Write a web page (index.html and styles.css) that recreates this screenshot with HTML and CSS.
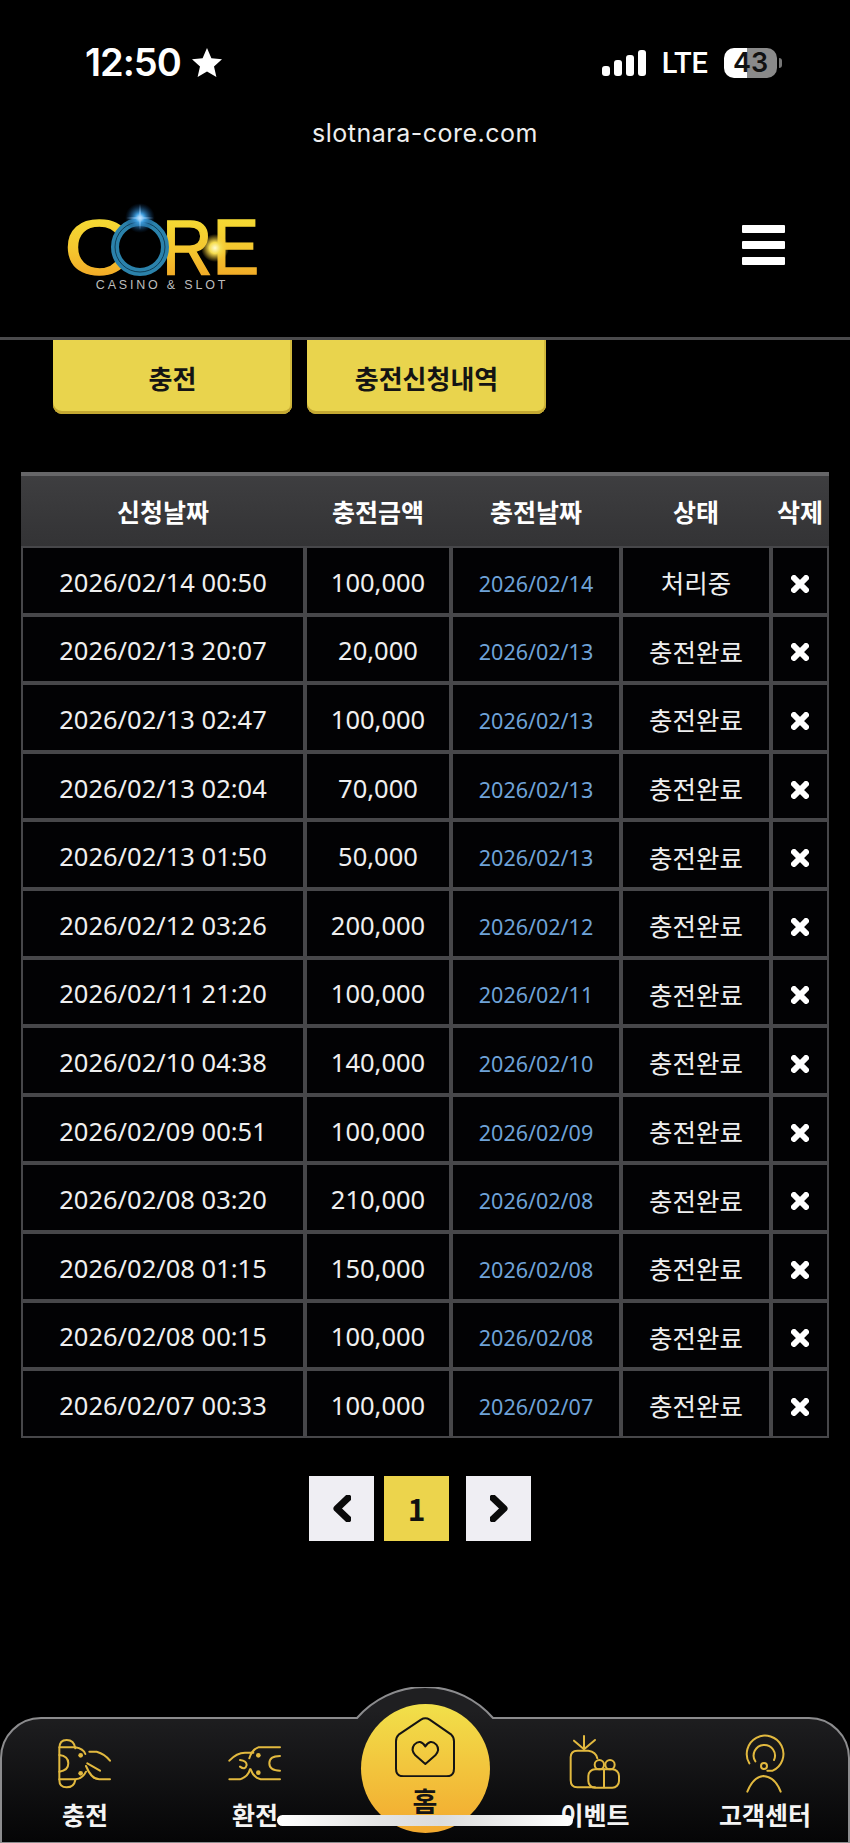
FILE: index.html

```html
<!DOCTYPE html>
<html lang="ko">
<head>
  <meta charset="UTF-8" />
  <meta name="viewport" content="width=device-width, initial-scale=1.0" />
  <title>충전신청내역</title>
  <link rel="stylesheet" href="styles.css">
</head>
<body>
<div class="page">

  <div class="status-bar">
    <div class="status-left">
      <span class="time">12:50</span>
      <svg class="star" viewBox="0 0 32 32"><polygon points="16,1 20.4,11.2 31,12.2 23,19.4 25.4,30 16,24.4 6.6,30 9,19.4 1,12.2 11.6,11.2" fill="#fff"/></svg>
    </div>
    <div class="status-right">
      <div class="signal"><span class="s1"></span><span class="s2"></span><span class="s3"></span><span class="s4"></span></div>
      <span class="lte">LTE</span>
      <div class="battery">43</div>
      <div class="battery-nub"></div>
    </div>
  </div>

  <div class="url">slotnara-core.com</div>

  <header class="header">
    <svg class="logo" viewBox="0 0 240 110">
      <defs>
        <linearGradient id="gold" x1="0" y1="0" x2="0" y2="1">
          <stop offset="0" stop-color="#f4e436"/>
          <stop offset="0.55" stop-color="#f5c52e"/>
          <stop offset="1" stop-color="#ee9a22"/>
        </linearGradient>
        <radialGradient id="flare">
          <stop offset="0" stop-color="#e8f6ff"/>
          <stop offset="0.3" stop-color="#3f9fe0"/>
          <stop offset="1" stop-color="#0a3a70" stop-opacity="0"/>
        </radialGradient>
        <radialGradient id="spark">
          <stop offset="0" stop-color="#fffbd0"/>
          <stop offset="0.4" stop-color="#f5dd50"/>
          <stop offset="1" stop-color="#f5c52e" stop-opacity="0"/>
        </radialGradient>
      </defs>
      <text class="logo-letter" x="24" y="86" textLength="66" lengthAdjust="spacingAndGlyphs" fill="url(#gold)" stroke="url(#gold)">C</text>
      <text class="logo-letter" x="122" y="86" textLength="97" lengthAdjust="spacingAndGlyphs" fill="url(#gold)" stroke="url(#gold)">RE</text>
      <circle cx="100" cy="59" r="25" fill="#000"/>
      <circle cx="100" cy="59" r="25" fill="none" stroke="#2b82ab" stroke-width="8"/>
      <circle cx="100" cy="59" r="25" fill="none" stroke="#0f3f58" stroke-width="1"/>
      <circle cx="100" cy="30" r="15" fill="url(#flare)"/>
      <path d="M100 16 L101.5 30 L100 42 L98.5 30Z M86 30 L100 28.5 L114 30 L100 31.5Z" fill="#9fd4ff" opacity="0.5"/>
      <circle cx="175" cy="60" r="14" fill="url(#spark)"/>
      <text class="logo-sub" x="122" y="101" text-anchor="middle">CASINO &amp; SLOT</text>
    </svg>
    <div class="burger"><span></span><span></span><span></span></div>
  </header>

  <div class="tabs">
    <button class="tab">충전</button>
    <button class="tab">충전신청내역</button>
  </div>

  <table class="history">
    <colgroup>
      <col class="c-req"><col class="c-amount"><col class="c-date"><col class="c-state"><col class="c-del">
    </colgroup>
    <thead>
      <tr><th>신청날짜</th><th>충전금액</th><th>충전날짜</th><th>상태</th><th>삭제</th></tr>
    </thead>
    <tbody>
      <tr><td>2026/02/14 00:50</td><td>100,000</td><td class="blue">2026/02/14</td><td>처리중</td><td><svg class="del" viewBox="0 0 18 18"><path d="M3 3L15 15M15 3L3 15"/></svg></td></tr>
      <tr><td>2026/02/13 20:07</td><td>20,000</td><td class="blue">2026/02/13</td><td>충전완료</td><td><svg class="del" viewBox="0 0 18 18"><path d="M3 3L15 15M15 3L3 15"/></svg></td></tr>
      <tr><td>2026/02/13 02:47</td><td>100,000</td><td class="blue">2026/02/13</td><td>충전완료</td><td><svg class="del" viewBox="0 0 18 18"><path d="M3 3L15 15M15 3L3 15"/></svg></td></tr>
      <tr><td>2026/02/13 02:04</td><td>70,000</td><td class="blue">2026/02/13</td><td>충전완료</td><td><svg class="del" viewBox="0 0 18 18"><path d="M3 3L15 15M15 3L3 15"/></svg></td></tr>
      <tr><td>2026/02/13 01:50</td><td>50,000</td><td class="blue">2026/02/13</td><td>충전완료</td><td><svg class="del" viewBox="0 0 18 18"><path d="M3 3L15 15M15 3L3 15"/></svg></td></tr>
      <tr><td>2026/02/12 03:26</td><td>200,000</td><td class="blue">2026/02/12</td><td>충전완료</td><td><svg class="del" viewBox="0 0 18 18"><path d="M3 3L15 15M15 3L3 15"/></svg></td></tr>
      <tr><td>2026/02/11 21:20</td><td>100,000</td><td class="blue">2026/02/11</td><td>충전완료</td><td><svg class="del" viewBox="0 0 18 18"><path d="M3 3L15 15M15 3L3 15"/></svg></td></tr>
      <tr><td>2026/02/10 04:38</td><td>140,000</td><td class="blue">2026/02/10</td><td>충전완료</td><td><svg class="del" viewBox="0 0 18 18"><path d="M3 3L15 15M15 3L3 15"/></svg></td></tr>
      <tr><td>2026/02/09 00:51</td><td>100,000</td><td class="blue">2026/02/09</td><td>충전완료</td><td><svg class="del" viewBox="0 0 18 18"><path d="M3 3L15 15M15 3L3 15"/></svg></td></tr>
      <tr><td>2026/02/08 03:20</td><td>210,000</td><td class="blue">2026/02/08</td><td>충전완료</td><td><svg class="del" viewBox="0 0 18 18"><path d="M3 3L15 15M15 3L3 15"/></svg></td></tr>
      <tr><td>2026/02/08 01:15</td><td>150,000</td><td class="blue">2026/02/08</td><td>충전완료</td><td><svg class="del" viewBox="0 0 18 18"><path d="M3 3L15 15M15 3L3 15"/></svg></td></tr>
      <tr><td>2026/02/08 00:15</td><td>100,000</td><td class="blue">2026/02/08</td><td>충전완료</td><td><svg class="del" viewBox="0 0 18 18"><path d="M3 3L15 15M15 3L3 15"/></svg></td></tr>
      <tr><td>2026/02/07 00:33</td><td>100,000</td><td class="blue">2026/02/07</td><td>충전완료</td><td><svg class="del" viewBox="0 0 18 18"><path d="M3 3L15 15M15 3L3 15"/></svg></td></tr>
    </tbody>
  </table>

  <div class="pager">
    <a class="pg"><svg viewBox="0 0 18 27"><path d="M15 3L4 13.5L15 24"/></svg></a>
    <a class="pg current">1</a>
    <a class="pg next"><svg viewBox="0 0 18 27"><path d="M3 3L14 13.5L3 24"/></svg></a>
  </div>

  <nav class="bottom-nav">
    <svg class="nav-shape" viewBox="0 0 850 156">
      <defs>
        <linearGradient id="navfill" x1="0" y1="0" x2="0" y2="1">
          <stop offset="0.15" stop-color="#1f1f21"/>
          <stop offset="1" stop-color="#050506"/>
        </linearGradient>
      </defs>
      <path d="M1 156 V71 A40 40 0 0 1 41 31 H357 A90 90 0 0 1 493 31 H809 A40 40 0 0 1 849 71 V156 Z" fill="url(#navfill)" stroke="#8c8c8e" stroke-width="2"/>
    </svg>

    <a class="nav-item">
      <svg class="nav-icon" viewBox="0 0 210 195">
        <path d="M28 55 V150 Q28 172 50 172 Q72 172 76 150 M28 55 Q28 30 50 30 Q72 30 76 55"/>
        <path d="M28 52 H76 Q100 56 106 72 M28 148 H76 Q98 146 108 125"/>
        <path d="M28 75 Q55 78 55 100 Q55 122 28 125"/>
        <circle class="dot" cx="92" cy="76" r="7"/><circle class="dot" cx="92" cy="130" r="7"/>
        <path d="M118 65 H140 Q165 72 180 92 M112 100 L150 122 M108 108 Q125 150 150 148 H180"/>
      </svg>
      <span>충전</span>
    </a>
    <a class="nav-item">
      <svg class="nav-icon" viewBox="0 0 210 195">
        <path d="M180 52 H115 Q95 60 88 85 M180 148 H122 Q100 142 92 118"/>
        <path d="M28 92 Q50 68 75 68 H100 M28 148 H60 Q85 140 90 118 M60 90 Q80 92 80 105 Q76 122 60 110"/>
        <circle class="dot" cx="115" cy="76" r="7"/><circle class="dot" cx="115" cy="128" r="7"/>
        <path d="M180 78 Q148 78 148 100 Q148 122 180 122"/>
      </svg>
      <span>환전</span>
    </a>
    <a class="nav-item home">
      <svg class="home-icon" viewBox="135 107 178 180">
        <path d="M212 115 L145 160 Q137 167 137 180 V262 Q137 285 160 285 H288 Q311 285 311 262 V180 Q311 167 303 160 L238 115 Q225 107 212 115Z"/>
        <path d="M225 248 L195 222 Q180 205 192 190 Q210 172 225 195 Q240 172 258 190 Q270 205 255 222 Z"/>
      </svg>
      <span>홈</span>
    </a>
    <a class="nav-item">
      <svg class="nav-icon" viewBox="0 0 210 195">
        <path d="M42 32 L72 58 M72 18 V58 M105 30 L72 58"/>
        <path d="M112 85 Q108 65 85 62 H52 Q32 62 32 82 V150 Q32 172 52 172 H105"/>
        <rect x="85" y="118" width="92" height="55" rx="20"/>
        <path d="M132 118 V172"/>
        <circle cx="118" cy="104" r="14"/><circle cx="150" cy="104" r="14"/>
      </svg>
      <span>이벤트</span>
    </a>
    <a class="nav-item">
      <svg class="nav-icon" viewBox="0 0 210 195">
        <path d="M58 100 A55 55 0 1 1 128 122 H112"/>
        <path d="M76 94 A32 32 0 1 1 132 90"/>
        <circle cx="102" cy="108" r="9"/>
        <path d="M52 185 Q70 140 100 138 Q135 140 152 185"/>
      </svg>
      <span>고객센터</span>
    </a>
  </nav>

  <div class="home-indicator"></div>
</div>
</body>
</html>
```

FILE: styles.css

```css
body {
  margin: 0;
  background-color: #000;
  color: #fff;
  font-family: "Noto Sans CJK KR", "Noto Sans", sans-serif;
}

.page {
  position: relative;
  height: 1843px;
  overflow: hidden;
  background: #000;
}

/* status bar */
.status-bar {
  display: flex;
  justify-content: space-between;
  align-items: center;
  height: 31px;
  padding: 47px 68px 0 85px;
}

.status-left {
  display: flex;
  align-items: center;
  gap: 10px;
}

.time {
  font-family: Inter, sans-serif;
  font-size: 38px;
  font-weight: 600;
  letter-spacing: -1px;
  line-height: 31px;
}

.star {
  width: 32px;
  height: 32px;
}

.status-right {
  display: flex;
  align-items: center;
}

.signal {
  display: flex;
  align-items: flex-end;
  gap: 4px;
  height: 26px;
  margin-right: 16px;
}

.signal span {
  width: 8px;
  background: #fff;
  border-radius: 3px;
}

.s1 { height: 10px; }
.s2 { height: 16px; }
.s3 { height: 21px; }
.s4 { height: 26px; }

.lte {
  font-family: Roboto, sans-serif;
  font-size: 29px;
  font-weight: 500;
  line-height: 30px;
  margin-right: 16px;
}

.battery {
  width: 53px;
  height: 30px;
  border-radius: 10px;
  background: linear-gradient(90deg, #fff 0 43%, #8a8a8a 43% 100%);
  color: #111;
  font-family: Inter, sans-serif;
  font-size: 27px;
  font-weight: 600;
  line-height: 30px;
  text-align: center;
}

.battery-nub {
  width: 3px;
  height: 10px;
  margin-left: 2px;
  background: #777;
  border-radius: 0 3px 3px 0;
}

.url {
  margin-top: 38px;
  height: 32px;
  font-family: Inter, sans-serif;
  font-size: 25px;
  line-height: 34px;
  letter-spacing: 0.5px;
  text-align: center;
  color: #eee;
}

/* header */
.header {
  display: flex;
  justify-content: space-between;
  align-items: center;
  height: 189px;
  padding: 0 65px 0 40px;
  border-bottom: 3px solid #4a4a4c;
}

.logo {
  width: 240px;
  height: 110px;
}

.logo-letter {
  font-family: "Liberation Sans", sans-serif;
  font-size: 78px;
  stroke-width: 1.5;
}

.logo-sub {
  font-family: "Liberation Sans", sans-serif;
  font-size: 12.5px;
  letter-spacing: 2.8px;
  fill: #bdbdbd;
}

.burger {
  display: flex;
  flex-direction: column;
  gap: 8px;
  width: 43px;
  margin-top: 4px;
}

.burger span {
  height: 8px;
  background: #fff;
  border-radius: 1px;
}

/* tabs */
.tabs {
  display: flex;
  gap: 15px;
  padding-left: 53px;
}

.tab {
  width: 239px;
  height: 74px;
  border: none;
  border-radius: 0 0 9px 9px;
  background: #e9d44d;
  box-shadow: inset 0 -3px 0 #c4a832, inset -2px 0 0 #d1b93c;
  color: #141414;
  font-family: "Noto Sans CJK KR", sans-serif;
  font-size: 26px;
  font-weight: 700;
  padding: 0;
}

/* table */
.history {
  width: 808px;
  margin: 58px 0 0 21px;
  border-collapse: separate;
  border-spacing: 0;
  table-layout: fixed;
}

.c-req { width: 284px; }
.c-amount { width: 146px; }
.c-date { width: 170px; }
.c-state { width: 150px; }
.c-del { width: 58px; }

.history th {
  height: 70px;
  padding: 0;
  background: linear-gradient(#3e3e40, #333335);
  border-top: 4px solid #666668;
  font-size: 25px;
  font-weight: 700;
  text-align: center;
}

.history td {
  height: 68.6px;
  padding: 3px 0 0;
  box-sizing: border-box;
  background: #020204;
  border: 2px solid #47474a;
  font-family: "Noto Sans", "Noto Sans CJK KR", sans-serif;
  font-size: 25.5px;
  text-align: center;
  color: #efefef;
}

.history td.blue {
  font-size: 21.5px;
  color: #6fa3d8;
  padding-top: 6px;
}

.del {
  display: block;
  width: 18px;
  height: 18px;
  margin: 4px auto 0;
  fill: none;
  stroke: #fff;
  stroke-width: 6;
  stroke-linecap: round;
}

/* pager */
.pager {
  display: flex;
  gap: 10px;
  margin-top: 38px;
  padding-left: 309px;
}

.pg {
  display: flex;
  align-items: center;
  justify-content: center;
  width: 65px;
  height: 65px;
  background: #efeef3;
  color: #111;
  font-size: 30px;
  font-weight: 700;
}

.pg.current {
  background: #ecd44c;
}

.pg.next {
  margin-left: 7px;
}

.pg svg {
  width: 18px;
  height: 27px;
  fill: none;
  stroke: #0a0a0a;
  stroke-width: 7;
  stroke-linecap: round;
  stroke-linejoin: round;
}

/* bottom nav */
.bottom-nav {
  position: absolute;
  left: 0;
  right: 0;
  bottom: 0;
  height: 156px;
  display: grid;
  grid-template-columns: repeat(5, 170px);
}

.nav-shape {
  position: absolute;
  left: 0;
  top: 0;
  width: 850px;
  height: 156px;
}

.nav-item {
  position: relative;
  display: flex;
  flex-direction: column;
  align-items: center;
  padding-top: 43px;
  font-size: 25px;
  font-weight: 700;
  line-height: 30px;
  color: #f4f4f4;
}

.nav-icon {
  width: 70px;
  height: 65px;
  margin-bottom: 4px;
  fill: none;
  stroke: #e2b93f;
  stroke-width: 6;
  stroke-linecap: round;
  stroke-linejoin: round;
}

.nav-icon .dot {
  fill: #e2b93f;
  stroke: none;
}

.nav-item.home {
  justify-self: center;
  align-self: start;
  width: 129px;
  height: 129px;
  margin-top: 17px;
  padding-top: 13px;
  box-sizing: border-box;
  border-radius: 50%;
  background: linear-gradient(#f1e04a, #f3a92f);
  color: #141414;
  font-size: 27px;
}

.home-icon {
  width: 60px;
  height: 60px;
  margin-bottom: 9px;
  flex-shrink: 0;
  fill: none;
  stroke: #141414;
  stroke-width: 6;
  stroke-linejoin: round;
}

.home-indicator {
  position: absolute;
  left: 277px;
  top: 1815px;
  width: 296px;
  height: 11px;
  border-radius: 6px;
  background: linear-gradient(90deg, #fff 0, #e4e4e4 35%, #dcdcdc 55%, #fff 100%);
}
```
